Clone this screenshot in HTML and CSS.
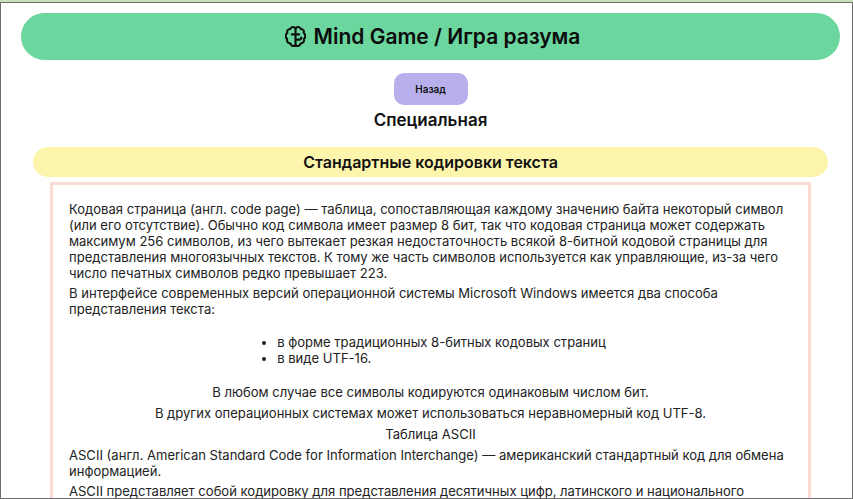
FILE: index.html
```html
<!DOCTYPE html>
<html lang="ru">
<head>
    <meta charset="UTF-8">
    <meta name="viewport" content="width=device-width, initial-scale=1.0">
    <title>Mind Game / Игра разума</title>
    <link rel="stylesheet" href="styles.css">
</head>
<body>

<div class="frame">
    <header class="shapka">
        <svg class="logo" viewBox="0 0 20 20" fill="none" stroke="#111" stroke-width="2" stroke-linecap="round" stroke-linejoin="round">
            <path d="M10 2.500C8.800 .4 5.800 .5 5 2.900C2.800 2.800 1.500 4.700 2.300 6.500C.3 7.700 .1 11 2 12.300C1.400 14.700 3 16.700 5 16.500C5.800 19.200 8.800 20 10 17.800C11.200 20 14.200 19.200 15 16.500C17 16.700 18.600 14.700 18 12.300C19.900 11 19.700 7.700 17.700 6.500C18.500 4.700 17.200 2.800 15 2.900C14.200 .5 11.200 .4 10 2.500Z"/>
            <path d="M10 2.500V17.800M10 8H6.500M10 8H13.500M10 13H13.500C14.800 13 15.500 12.200 15.500 11"/>
        </svg>
        <h1>Mind Game / Игра разума</h1>
    </header>

    <div class="centr">
        <button class="nazad">Назад</button>
    </div>
    <h2 class="razdel">Специальная</h2>

    <h3 class="tema">Стандартные кодировки текста</h3>

    <div class="tekst">
        <p>Кодовая страница (англ. code page) — таблица, сопоставляющая каждому значению байта некоторый символ (или его отсутствие). Обычно код символа имеет размер 8 бит, так что кодовая страница может содержать максимум 256 символов, из чего вытекает резкая недостаточность всякой 8-битной кодовой страницы для представления многоязычных текстов. К тому же часть символов используется как управляющие, из-за чего число печатных символов редко превышает 223.</p>
        <p>В интерфейсе современных версий операционной системы Microsoft Windows имеется два способа представления текста:</p>
        <ul>
            <li>в форме традиционных 8-битных кодовых страниц</li>
            <li>в виде UTF-16.</li>
        </ul>
        <p class="sred">В любом случае все символы кодируются одинаковым числом бит.</p>
        <p class="sred">В других операционных системах может использоваться неравномерный код UTF-8.</p>
        <p class="sred">Таблица ASCII</p>
        <p>ASCII (англ. American Standard Code for Information Interchange) — американский стандартный код для обмена информацией.</p>
        <p>ASCII представляет собой кодировку для представления десятичных цифр, латинского и национального алфавитов, знаков препинания и управляющих символов.</p>
    </div>
</div>

</body>
</html>
```

FILE: styles.css
```css
html, body {
    margin: 0;
    height: 499px;
    overflow: hidden;
    background-color: #c9e2b5;
}
.frame {
    box-sizing: border-box;
    height: 497px;
    margin-top: 2px;
    padding: 10px 12px 0 20px;
    background-color: white;
    border: 1px solid #6f6f6f;
    overflow: hidden;
    font-family: Inter, sans-serif;
    color: #111;
}
.shapka {
    display: flex;
    align-items: center;
    justify-content: center;
    gap: 8px;
    height: 47px;
    padding-left: 4px;
    background-color: #6bd69e;
    border-radius: 24px;
}
.logo {
    width: 21px;
    height: 21px;
}
.shapka h1 {
    margin: 0;
    font-size: 21px;
    font-weight: 600;
    color: #0c0c0c;
}
.centr {
    display: flex;
    justify-content: center;
    margin-top: 13px;
}
.nazad {
    width: 74px;
    height: 32px;
    font-family: Inter, sans-serif;
    font-size: 10px;
    font-weight: 600;
    color: #111;
    background-color: #b7b0ec;
    border: none;
    border-radius: 10px;
}
.razdel {
    margin: 5px 0 0;
    font-size: 17px;
    line-height: 21px;
    font-weight: 600;
    text-align: center;
}
.tema {
    margin: 16px 12px 0;
    height: 30px;
    font-size: 16px;
    line-height: 30px;
    font-weight: 600;
    text-align: center;
    background-color: #fdf5ab;
    border-radius: 15px;
}
.tekst {
    margin: 5px 29px 0;
    padding: 16px 16px;
    border: 3px solid #f9dcd3;
    font-size: 13.05px;
    line-height: 16px;
    color: #222;
}
.tekst p {
    margin: 0 0 4px;
}
.tekst ul {
    width: fit-content;
    margin: 17px auto 18px;
    padding-left: 22px;
}
.sred {
    text-align: center;
}
.tekst .sred {
    margin-bottom: 5px;
}
```
